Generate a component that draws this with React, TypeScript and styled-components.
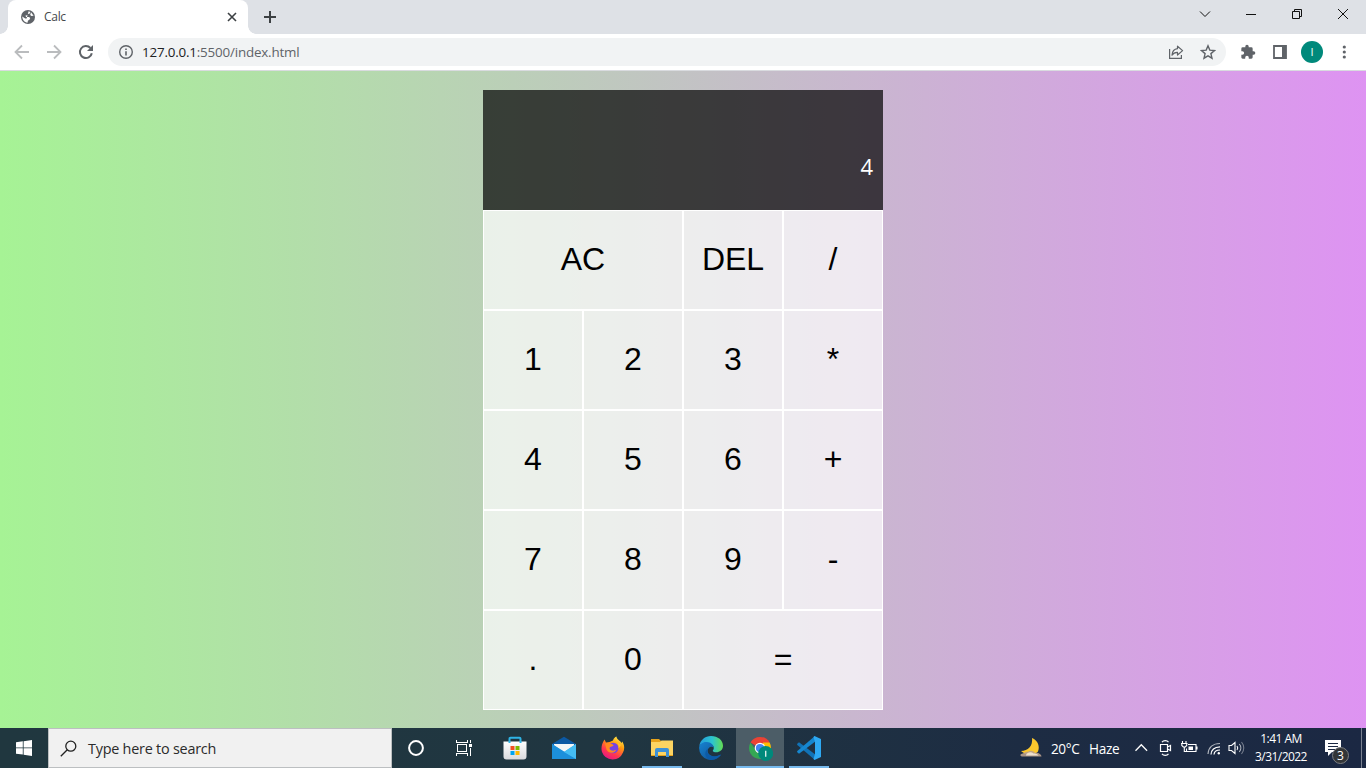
import React from 'react';
import styled, { createGlobalStyle, css } from 'styled-components';

const Global = createGlobalStyle`
  *, *::before, *::after { box-sizing: border-box; }
  html, body { margin: 0; padding: 0; overflow: hidden; }
  svg { display: block; flex: none; }
`;

const ui = css`font-family: "Open Sans", "Noto Sans", sans-serif;`;

const Screen = styled.div`
  width: 1366px;
  height: 768px;
  display: flex;
  flex-direction: column;
  ${ui}
`;

const TabStrip = styled.header`
  height: 34px;
  flex: none;
  display: flex;
  align-items: center;
  justify-content: space-between;
  background: #dee1e6;
`;

const TabArea = styled.div`
  display: flex;
  height: 34px;
`;

const Tab = styled.div`
  position: relative;
  width: 240px;
  margin-left: 8px;
  padding: 0 10px 0 12px;
  display: flex;
  align-items: center;
  background: #fff;
  border-radius: 8px 8px 0 0;
  &::before, &::after {
    content: '';
    position: absolute;
    bottom: 0;
    width: 8px;
    height: 8px;
  }
  &::before { left: -8px; background: radial-gradient(circle at 0 0, transparent 7.5px, #fff 8px); }
  &::after { right: -8px; background: radial-gradient(circle at 100% 0, transparent 7.5px, #fff 8px); }
`;

const TabTitle = styled.span`
  flex: 1;
  margin-left: 8px;
  font-size: 12px;
  line-height: 16px;
  color: #45484c;
  letter-spacing: -0.3px;
`;

const NewTab = styled.div`
  display: flex;
  align-items: center;
  margin-left: 15px;
`;

const WindowButtons = styled.div`
  display: flex;
  align-items: center;
  height: 28px;
  margin-bottom: 6px;
`;

const WindowButton = styled.div`
  width: 46px;
  display: flex;
  justify-content: center;
`;

const Toolbar = styled.div`
  height: 37px;
  flex: none;
  display: flex;
  align-items: center;
  padding: 0 14px 0 14px;
  background: #fff;
  border-bottom: 1px solid #d9dbdf;
`;

const NavButtons = styled.div`
  display: flex;
  gap: 16px;
`;

const AddressBar = styled.div`
  flex: 1;
  height: 28px;
  margin-left: 14px;
  padding: 0 10px;
  display: flex;
  align-items: center;
  background: #f1f3f4;
  border-radius: 14px;
`;

const Address = styled.span`
  flex: 1;
  margin-left: 8px;
  font-size: 13.4px;
  line-height: 18px;
  color: #5f6368;
  letter-spacing: -0.19px;
`;

const Host = styled.span`
  color: #202124;
`;

const BarIcons = styled.div`
  display: flex;
  gap: 16px;
`;

const ToolIcons = styled.div`
  display: flex;
  align-items: center;
  margin-left: 14px;
`;

const Avatar = styled.div`
  width: 22px;
  height: 22px;
  margin: 0 13px;
  display: flex;
  align-items: center;
  justify-content: center;
  border-radius: 50%;
  background: #00897b;
  color: #e3f3f1;
  font: 11px "Liberation Sans", sans-serif;
`;

const Page = styled.main`
  flex: 1;
  display: flex;
  justify-content: center;
  align-items: flex-start;
  padding-top: 19px;
  background: linear-gradient(to right, #a6f395, #de93f2);
`;

const Calculator = styled.div`
  display: grid;
  grid-template-columns: repeat(4, 100px);
  grid-template-rows: 120px repeat(5, 100px);
`;

const Display = styled.div`
  grid-column: 1 / -1;
  padding: 10px 10px 29px;
  display: flex;
  align-items: flex-end;
  justify-content: flex-end;
  background: rgba(0, 0, 0, 0.7);
`;

const Current = styled.div`
  color: #fff;
  font: 22px/30px "Open Sans", sans-serif;
`;

const Key = styled.button<{ $wide?: boolean }>`
  grid-column: span ${({ $wide }) => ($wide ? 2 : 1)};
  margin: 0;
  padding: 0 6px 2px;
  border: 1px solid #fff;
  background: rgba(255, 255, 255, 0.7);
  color: #000;
  font: 32px "Liberation Sans", Arial, sans-serif;
`;

const Taskbar = styled.footer`
  height: 40px;
  flex: none;
  display: flex;
  background: linear-gradient(to right, #20373f 0%, #203641 45%, #1d2c43 75%, #1b2843 100%);
  color: #fff;
`;

const Start = styled.div`
  width: 48px;
  display: flex;
  align-items: center;
  justify-content: center;
`;

const Search = styled.div`
  width: 344px;
  display: flex;
  align-items: center;
  gap: 11px;
  padding-left: 11px;
  background: #f1f1f1;
  border: 1px solid #bcbfc1;
  color: #2b2b2b;
  font-size: 14.4px;
  letter-spacing: -0.23px;
`;

const SystemButton = styled.div`
  width: 48px;
  display: flex;
  align-items: center;
  justify-content: center;
`;

const Apps = styled.div`
  display: flex;
  gap: 1px;
  margin-left: 3px;
`;

const AppButton = styled.div<{ $open?: boolean; $active?: boolean }>`
  width: 48px;
  height: 40px;
  display: flex;
  align-items: center;
  justify-content: center;
  background: ${({ $active, $open }) =>
    $active
      ? 'linear-gradient(#76b9ed, #76b9ed) bottom / 48px 2px no-repeat, #4c5d67'
      : $open
      ? 'linear-gradient(#76b9ed, #76b9ed) bottom / 40px 2px no-repeat'
      : 'none'};
`;

const Tray = styled.div`
  margin-left: auto;
  display: flex;
  align-items: center;
  font-size: 13.6px;
`;

const Weather = styled.div`
  display: flex;
  align-items: center;
  white-space: pre;
`;

const Temperature = styled.span`
  width: 30px;
  margin: 1px 8px 0 8px;
  letter-spacing: -0.4px;
`;

const Condition = styled.span`
  width: 32px;
  margin-top: 1px;
  letter-spacing: -0.3px;
`;

const TrayIcons = styled.div`
  display: flex;
  align-items: center;
  gap: 9px;
  margin-left: 14px;
`;

const Clock = styled.div`
  width: 62px;
  margin-left: 5px;
  text-align: center;
  font-size: 12px;
  line-height: 18px;
  letter-spacing: -0.55px;
  white-space: nowrap;
`;

const Notifications = styled.div`
  position: relative;
  margin: 0 4px 0 13px;
  padding-top: 11px;
  width: 37px;
  height: 40px;
  border-right: 1px solid #7a8190;
`;

const Count = styled.span`
  position: absolute;
  left: 7px;
  top: 19px;
  width: 17px;
  height: 17px;
  border: 1px solid #7d7f82;
  border-radius: 50%;
  background: #333638;
  font-size: 12px;
  line-height: 15px;
  text-align: center;
`;

const GlobeIcon = () => (
  <svg width="16" height="16" viewBox="0 0 16 16">
    <circle cx="8" cy="8" r="7" fill="#5f6368" />
    <path d="M8.600 2.300 10.300 3 9.800 4.600 8 5 7.300 6.300 5.500 6.600 6 8h3.200l1 1.300L9.200 11 8 11.600l-.5 2.100C4.500 13.500 2.300 11 2.300 7.600L5.200 9.500H6.600M11 3.200l2.600 3.600-2.200.2-1.200-1z" fill="#fff" />
  </svg>
);

const CloseIcon = () => (
  <svg width="12" height="12" viewBox="0 0 12 12" stroke="#3c4043" strokeWidth="1.6"><path d="m2 2 8 8M10 2l-8 8" /></svg>
);

const PlusIcon = () => (
  <svg width="14" height="14" viewBox="0 0 14 14" stroke="#3c4043" strokeWidth="2"><path d="M7 1v12M1 7h12" /></svg>
);

const ArrowIcon = ({ right = false }: { right?: boolean }) => (
  <svg width="16" height="16" viewBox="0 0 16 16" fill="none" stroke="#babcbe" strokeWidth="1.8">
    <path d={right ? 'M1 8h13M8 1.5 14.5 8 8 14.5' : 'M15 8H2M8 1.5 1.5 8 8 14.5'} />
  </svg>
);

const ReloadIcon = () => (
  <svg width="16" height="16" viewBox="0 0 16 16">
    <path d="M13.8 9.2A6 6 0 1 1 12.4 4" fill="none" stroke="#5f6368" strokeWidth="2" />
    <path d="M15 1v6H9z" fill="#5f6368" />
  </svg>
);

const InfoIcon = () => (
  <svg width="16" height="16" viewBox="0 0 16 16">
    <circle cx="8" cy="8" r="6.3" fill="none" stroke="#5f6368" strokeWidth="1.4" />
    <path d="M7.2 4.4h1.6V6H7.2zM7.2 7.2h1.6v4.3H7.2z" fill="#5f6368" />
  </svg>
);

const ShareIcon = () => (
  <svg width="16" height="16" viewBox="0 0 16 16" fill="none" stroke="#5f6368" strokeWidth="1.2">
    <path d="M1.6 5v9.4h11.8V11" />
    <path d="M9.5 2.2 14.6 6.6 9.5 11V8.4C7 8.3 5.3 9.1 4 11.2 4.3 7.4 6.3 5 9.5 4.7z" strokeLinejoin="round" />
  </svg>
);

const StarIcon = () => (
  <svg width="16" height="16" viewBox="0 0 16 16">
    <path d="m8 1.8 1.8 4.3 4.7.4-3.6 3.1 1.1 4.6L8 11.8l-4 2.4 1.1-4.6L1.500 6.500l4.700-.4z" fill="none" stroke="#5f6368" strokeWidth="1.4" />
  </svg>
);

const PuzzleIcon = () => (
  <svg width="16" height="16" viewBox="0 0 24 24" fill="#5f6368">
    <path d="M20.500 11H19V7a2 2 0 0 0-2-2h-4V3.500a2.500 2.500 0 0 0-5 0V5H4a2 2 0 0 0-2 2v3.800h1.500a2.700 2.700 0 0 1 0 5.400H2V20c0 1.100.9 2 2 2h3.800v-1.500a2.700 2.700 0 0 1 5.400 0V22H17a2 2 0 0 0 2-2v-4h1.500a2.500 2.500 0 0 0 0-5z" />
  </svg>
);

const PanelIcon = () => (
  <svg width="16" height="16" viewBox="0 0 16 16">
    <path d="M2 2h12v12H2z" fill="none" stroke="#5f6368" strokeWidth="1.8" />
    <path d="M10 2h4v12h-4z" fill="#5f6368" />
  </svg>
);

const DotsIcon = () => (
  <svg width="16" height="16" viewBox="0 0 16 16" fill="#5f6368">
    <circle cx="8.300" cy="3" r="1.600" /><circle cx="8.300" cy="8" r="1.600" /><circle cx="8.300" cy="13" r="1.600" />
  </svg>
);

const windowPaths = ['M1 3.500l5 5 5-5', 'M1 6.500h10', 'M1.500 3.500h7v7h-7zM3.500 3.500v-2h7v7h-2', 'm1 1 10 10M11 1 1 11'];

const WindowsLogo = () => (
  <svg width="16" height="16" viewBox="0 0 16 16" fill="#fff">
    <path d="M0 2.200 6.800 1.300v6.200H0zM7.600 1.200 16 0v7.500H7.600zM0 8.300h6.800v6.300L0 13.700zM7.600 8.300H16V16l-8.400-1.200z" />
  </svg>
);

const SearchIcon = () => (
  <svg width="17" height="17" viewBox="0 0 17 17" fill="none" stroke="#222" strokeWidth="1.300">
    <circle cx="10.800" cy="6.200" r="5" /><path d="M7.300 9.700 .8 16.200" />
  </svg>
);

const CortanaIcon = () => (
  <svg width="18" height="18" viewBox="0 0 18 18"><circle cx="9" cy="9" r="6.900" fill="none" stroke="#fff" strokeWidth="2" /></svg>
);

const TaskViewIcon = () => (
  <svg width="17" height="16" viewBox="0 0 17 16" fill="none" stroke="#fff" shapeRendering="crispEdges">
    <path d="M1.500 4.500h9v7h-9zM.5 0v2.500h11V0M.5 16v-2.500h11V16M14.500 0v3M14.500 8v8" />
    <path d="M13 4h3v3h-3z" fill="#fff" stroke="none" />
  </svg>
);

const StoreIcon = () => (
  <svg width="24" height="24" viewBox="0 0 24 24">
    <defs><linearGradient id="bag" x2="0" y2="1"><stop stopColor="#fff" /><stop offset="1" stopColor="#d9dadd" /></linearGradient></defs>
    <path d="M.5 5.500h23v15a3 3 0 0 1-3 3h-17a3 3 0 0 1-3-3z" fill="url(#bag)" />
    <path d="M6.500 7V2.700a1 1 0 0 1 1-1h9a1 1 0 0 1 1 1V7" fill="none" stroke="#2fb4e6" strokeWidth="2" />
    <path d="M7.500 10h4v4h-4z" fill="#f25022" /><path d="M12.500 10h4v4h-4z" fill="#7fba00" />
    <path d="M7.500 15h4v4h-4z" fill="#00a4ef" /><path d="M12.500 15h4v4h-4z" fill="#ffb900" />
  </svg>
);

const MailIcon = () => (
  <svg width="24" height="24" viewBox="0 0 24 24">
    <path d="M0 8 12 .8 24 8v3H0z" fill="#0c59a4" />
    <path d="M2 8h20v8H2z" fill="#f4f6f7" />
    <path d="M0 8l12 8L24 8v15H0z" fill="#2aa5ea" />
    <path d="M0 8l24 15H0z" fill="#1c8fdb" /><path d="M24 8v15L12 16z" fill="#45bdf3" />
  </svg>
);

const FirefoxIcon = () => (
  <svg width="24" height="24" viewBox="0 0 24 24">
    <defs>
      <linearGradient id="fox" x1=".8" y1="0" x2=".25" y2="1"><stop stopColor="#fff44f" /><stop offset=".35" stopColor="#ff980e" /><stop offset=".7" stopColor="#ff3750" /><stop offset="1" stopColor="#e31587" /></linearGradient>
    </defs>
    <path d="M3.500 3.500 5 6.500 8.500 6 12 4.500C12.500 2.500 14 1 15.500.5c0 3 4 4 5 6.500l.8-1.500c2 3 2.700 7.500.7 11A11.300 11.300 0 0 1 1 16C-.2 12 .8 7.500 3.500 3.500z" fill="url(#fox)" />
    <circle cx="12.200" cy="12" r="5.300" fill="#7543e5" />
    <path d="M4 7.500C7.500 6 10 7.500 12.500 9c0 1.500-3.500 1.500-4 3 0 3 5 3.500 7 1.500-1 4-8 4.500-10 0z" fill="#ff8a1f" />
    <path d="M14 5c3 1.500 4 4 3.500 7.500L20 9z" fill="#ffc72e" />
  </svg>
);

const FolderIcon = () => (
  <svg width="22" height="20" viewBox="0 0 22 20">
    <path d="M0 1h8l2 2h12v15H0z" fill="#e8a31b" />
    <path d="M0 4h9l1.500-1.500H22V17H0z" fill="#fcd462" />
    <path d="M4 19v-7a2 2 0 0 1 2-2h10a2 2 0 0 1 2 2v7h-3v-5H7v5z" fill="#3d91d6" />
  </svg>
);

const EdgeIcon = () => (
  <svg width="24" height="24" viewBox="0 0 24 24">
    <defs>
      <linearGradient id="edgeTop"><stop stopColor="#249bdd" /><stop offset=".55" stopColor="#2cc4cf" /><stop offset="1" stopColor="#63dc52" /></linearGradient>
      <linearGradient id="edgeLow" x2="1" y2="1"><stop stopColor="#1683d2" /><stop offset="1" stopColor="#114a8b" /></linearGradient>
    </defs>
    <path d="M.3 10C1.300 4 6 .1 12 .1c7 0 12 4.400 12 9.600 0 4.300-3.300 6.500-6.800 6.500-2 0-3.800-.8-3.400-1.800.5-.8 1-1.300 1-2.500C14.500 7 4.500 5 .3 10z" fill="url(#edgeTop)" />
    <path d="M.1 12C.2 8 4 5.600 8 6c3.500.3 6.500 2.500 6.700 5.500-3-2-6.500.5-6 4 .7 4.500 7.500 6.500 13.500 3A12 12 0 0 1 .1 12z" fill="url(#edgeLow)" />
    <path d="M9.400 12.300c-3.500 4.700 1.500 9.500 8.800 7.800l4-1.600c-2.700 4-7 5.500-10.400 5.400-5.800-1-7.500-8.500-2.400-11.600z" fill="#0b5aa8" />
  </svg>
);

const ChromeIcon = () => (
  <svg width="26" height="26" viewBox="-1 -1 26 26">
    <path d="M12 12 2.500 6.500a11 11 0 0 1 19.100 0z" fill="#ea4335" />
    <path d="M12 12h11a11 11 0 0 1-11 11z" fill="#fbbc04" />
    <path d="M21.600 6.500A11 11 0 0 1 23 12h-8V6.500z" fill="#fbbc04" />
    <path d="M2.500 6.500A11 11 0 0 0 12 23l3-6-6-1z" fill="#34a853" />
    <circle cx="12" cy="12" r="5.300" fill="#fff" /><circle cx="12" cy="12" r="4.100" fill="#4285f4" />
    <circle cx="17.700" cy="17.500" r="7.500" fill="#00897b" /><path d="M17.700 14.700v6" stroke="#d6ece9" strokeWidth="1.400" />
  </svg>
);

const CodeIcon = () => (
  <svg width="24" height="24" viewBox="0 0 24 24">
    <path d="m0 8 2-1.700 16 12V24L.3 9z" fill="#1173b7" />
    <path d="m0 16 2 1.700 16-12V0L.3 15z" fill="#1687d0" />
    <path d="m17.500 0 6.500 3v18l-6.500 3-1-1L18 18V6l-1.500-5z" fill="#2ea9f3" />
  </svg>
);

const MoonIcon = () => (
  <svg width="24" height="22" viewBox="0 0 24 22">
    <path d="M13 1c6 2.500 8 8.500 6 13.500-3 4-12 4.500-17-.5C9 14 14 9 13 1z" fill="#fbc72d" />
    <path d="M4 19.500c-3 0-3.500-2.300-1-2.800 2-.2 3-2.200 6-2 3-2 6-.5 7 1.200 3-.8 6.500 1.500 6.500 3.600z" fill="#b9a08e" opacity=".9" />
    <path d="M7 18c1.500-3 5-3.500 7.500-1.500 2 0 4 .5 5 2H7z" fill="#eee0ce" />
  </svg>
);

const TrayUp = () => (
  <svg width="14" height="14" viewBox="0 0 14 14" fill="none" stroke="#fff" strokeWidth="1.300"><path d="m.5 9.800 5.800-6 5.800 6" /></svg>
);

const MeetIcon = () => (
  <svg width="14" height="18" viewBox="-1 0 14 18" fill="none" stroke="#fff" strokeWidth="1.200">
    <path d="M1.500 5.500h7v7h-7zM8.500 8l3-1.500v5l-3-1.500M3 3.200C4.500 1.200 8 1.200 9.500 3.200M3 14.800c1.500 2 5 2 6.500 0" />
  </svg>
);

const BatteryIcon = () => (
  <svg width="17" height="16" viewBox="0 0 17 16" fill="none" stroke="#fff" strokeWidth="1.100">
    <path d="M7 4.500h8v7H5.500v-3M16 6.500v3M0 3.500h6.500M1.500 1v2M5 1v2M.8 3.500v2l1.500 1.500h2L5.700 5.500v-2M3.300 7v4.500h2" />
    <path d="M7.500 6.500h4.500v3.500H7.500z" fill="#fff" stroke="none" />
  </svg>
);

const WifiIcon = () => (
  <svg width="14" height="14" viewBox="0 0 14 14" fill="none" stroke="#fff" strokeWidth="1.200">
    <path d="M1 13C1.500 6.500 6 2.500 13 2.500" opacity=".65" /><path d="M4 13.500c.3-5 3.500-7.500 9-7.700M7 13.500c.2-3 2.500-4.500 6-4.500" /><circle cx="11.800" cy="12.300" r="1.200" fill="#fff" stroke="none" />
  </svg>
);

const SoundIcon = () => (
  <svg width="17" height="16" viewBox="0 0 17 16" fill="none" stroke="#fff" strokeWidth="1.100">
    <path d="M1 5.500h2.500L7 2.500v11l-3.500-3H1zM9 6c1 1.300 1 2.700 0 4" /><path d="M11.300 4c2 2.300 2 5.700 0 8" opacity=".7" /><path d="M13.500 2c3 3.500 3 8.500 0 12" opacity=".4" />
  </svg>
);

const NoteIcon = () => (
  <svg width="17" height="18" viewBox="0 0 17 18">
    <path d="M0 1h16v12H7l-4 4v-4H0z" fill="#fff" /><path d="M3 4.500h10M3 7.500h10M3 10.500h7" stroke="#1c2943" />
  </svg>
);

const SoundGroup = styled.div`
  display: flex;
  align-items: center;
  gap: 7px;
`;

const keys = ['AC', 'DEL', '/', '1', '2', '3', '*', '4', '5', '6', '+', '7', '8', '9', '-', '.', '0', '='];

export default function App() {
  return (
    <Screen>
      <Global />
      <TabStrip>
        <TabArea>
          <Tab><GlobeIcon /><TabTitle>Calc</TabTitle><CloseIcon /></Tab>
          <NewTab><PlusIcon /></NewTab>
        </TabArea>
        <WindowButtons>
          {windowPaths.map((d) => (
            <WindowButton key={d}>
              <svg width="12" height="12" viewBox="0 0 12 12" fill="none" stroke="#111" strokeWidth="1"><path d={d} /></svg>
            </WindowButton>
          ))}
        </WindowButtons>
      </TabStrip>
      <Toolbar>
        <NavButtons><ArrowIcon /><ArrowIcon right /><ReloadIcon /></NavButtons>
        <AddressBar>
          <InfoIcon />
          <Address><Host>127.0.0.1</Host>:5500/index.html</Address>
          <BarIcons><ShareIcon /><StarIcon /></BarIcons>
        </AddressBar>
        <ToolIcons>
          <BarIcons><PuzzleIcon /><PanelIcon /></BarIcons>
          <Avatar>I</Avatar>
          <DotsIcon />
        </ToolIcons>
      </Toolbar>
      <Page>
        <Calculator>
          <Display><Current>4</Current></Display>
          {keys.map((k) => <Key key={k} $wide={k === 'AC' || k === '='}>{k}</Key>)}
        </Calculator>
      </Page>
      <Taskbar>
        <Start><WindowsLogo /></Start>
        <Search><SearchIcon />Type here to search</Search>
        <SystemButton><CortanaIcon /></SystemButton>
        <SystemButton><TaskViewIcon /></SystemButton>
        <Apps>
          <AppButton><StoreIcon /></AppButton>
          <AppButton><MailIcon /></AppButton>
          <AppButton><FirefoxIcon /></AppButton>
          <AppButton $open><FolderIcon /></AppButton>
          <AppButton><EdgeIcon /></AppButton>
          <AppButton $active><ChromeIcon /></AppButton>
          <AppButton $open><CodeIcon /></AppButton>
        </Apps>
        <Tray>
          <Weather><MoonIcon /><Temperature>20°C</Temperature><Condition>Haze</Condition></Weather>
          <TrayIcons><TrayUp /><MeetIcon /><BatteryIcon /><SoundGroup><WifiIcon /><SoundIcon /></SoundGroup></TrayIcons>
          <Clock>1:41 AM<br />3/31/2022</Clock>
          <Notifications><NoteIcon /><Count>3</Count></Notifications>
        </Tray>
      </Taskbar>
    </Screen>
  );
}
